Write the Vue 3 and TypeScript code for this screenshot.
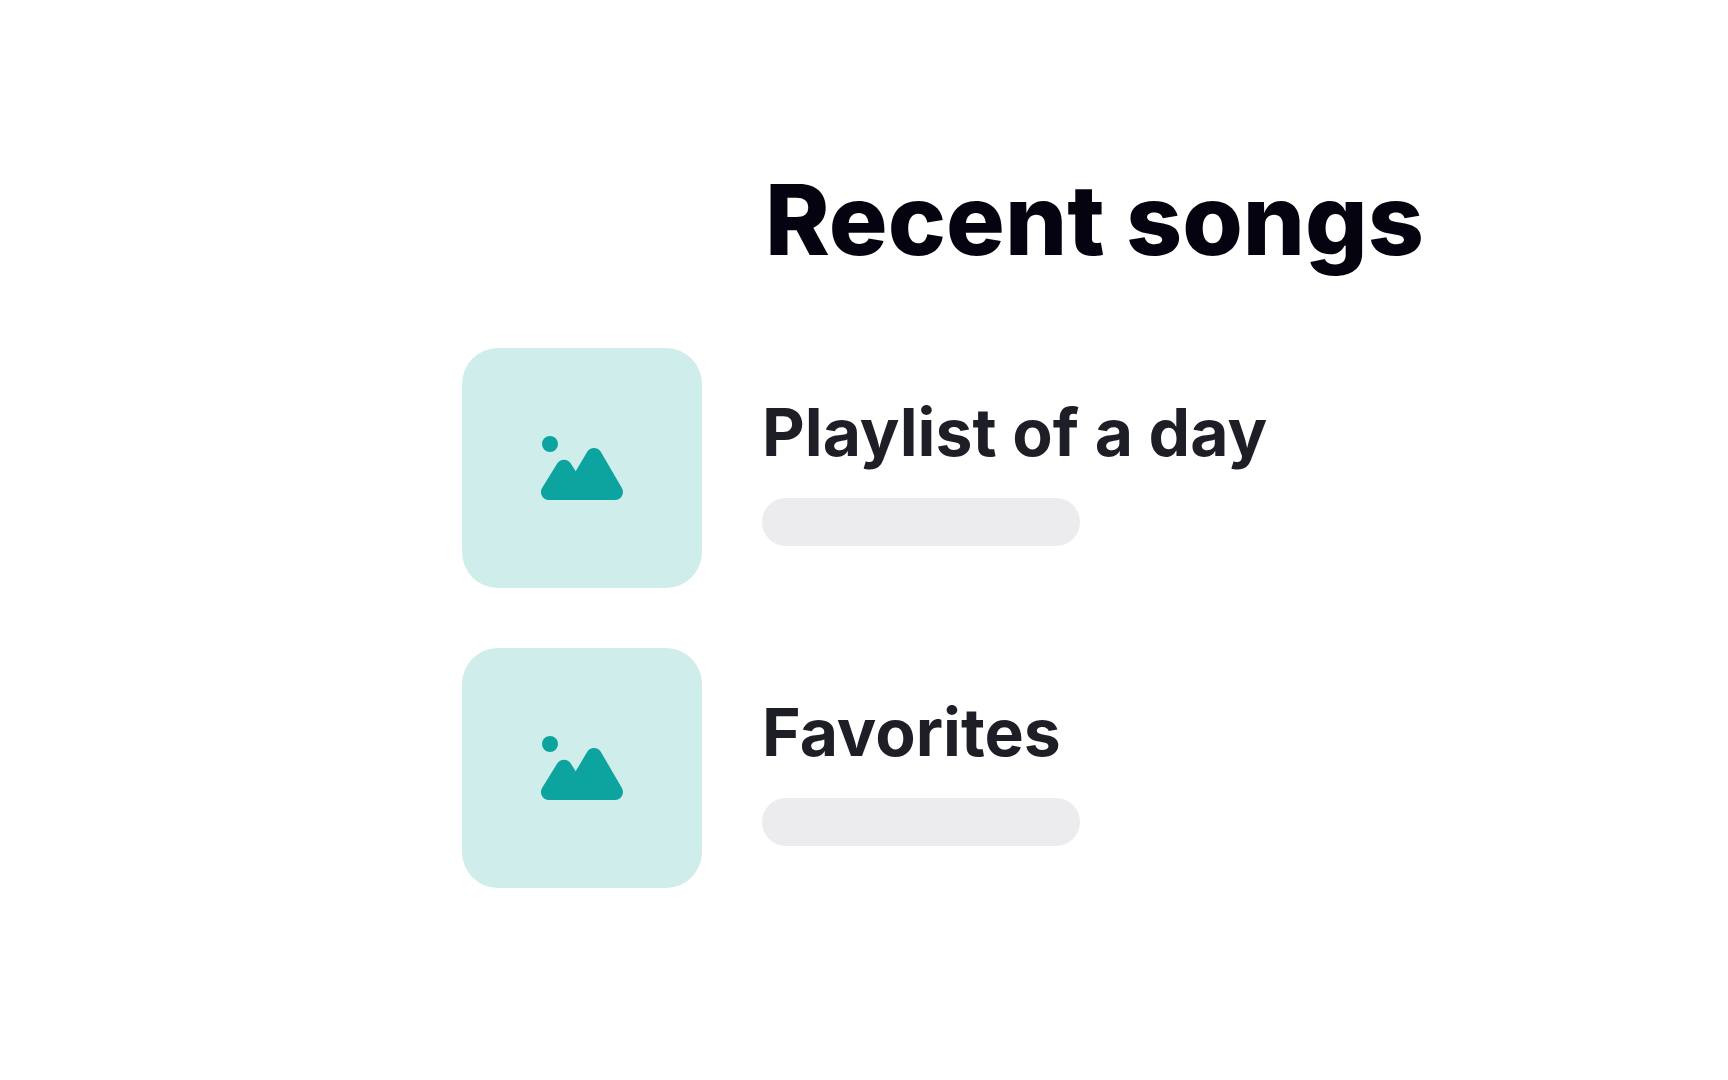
<script setup lang="ts">
interface Playlist {
  id: number
  title: string
}

const playlists: Playlist[] = [
  { id: 1, title: 'Playlist of a day' },
  { id: 2, title: 'Favorites' },
]
</script>

<template>
  <main class="page">
    <section class="recent">
      <h1 class="heading">Recent songs</h1>
      <ul class="list">
        <li v-for="item in playlists" :key="item.id" class="item">
          <div class="cover">
            <svg class="cover-icon" viewBox="0 0 84 66" aria-hidden="true">
              <circle cx="10" cy="9" r="8" />
              <path d="M2.2 52.8 L17.2 28.5 A8 8 0 0 1 30.8 28.5 L35.7 36.3 L47.1 17 A8 8 0 0 1 60.9 17 L81.9 53 A8 8 0 0 1 75 65 H9 A8 8 0 0 1 2.2 52.8 Z" />
            </svg>
          </div>
          <div class="details">
            <h2 class="title">{{ item.title }}</h2>
            <div class="placeholder"></div>
          </div>
        </li>
      </ul>
    </section>
  </main>
</template>

<style>
body {
  margin: 0;
  background: #ffffff;
}
</style>

<style scoped>
.page {
  display: flex;
  justify-content: center;
  padding: 160px 24px;
  font-family: Inter, "Liberation Sans", sans-serif;
}

.recent {
  width: 100%;
  max-width: 804px;
}

.heading {
  margin: 0 0 68px 303px;
  color: #04030f;
  font-size: 98px;
  font-weight: 800;
  line-height: 120px;
  white-space: nowrap;
}

.list {
  display: flex;
  flex-direction: column;
  gap: 60px;
  margin: 0;
  padding: 0;
  list-style: none;
}

.item {
  display: flex;
  align-items: center;
  gap: 60px;
}

.cover {
  display: flex;
  flex-shrink: 0;
  align-items: center;
  justify-content: center;
  width: 240px;
  height: 240px;
  border-radius: 36px;
  background: #cfedeb;
}

.cover-icon {
  width: 84px;
  height: 66px;
  fill: #0da39e;
}

.title {
  margin: 0 0 24px;
  color: #1e1e26;
  font-size: 66px;
  font-weight: 700;
  line-height: 84px;
  white-space: nowrap;
}

.placeholder {
  width: 318px;
  height: 48px;
  border-radius: 24px;
  background: #ececee;
}
</style>
